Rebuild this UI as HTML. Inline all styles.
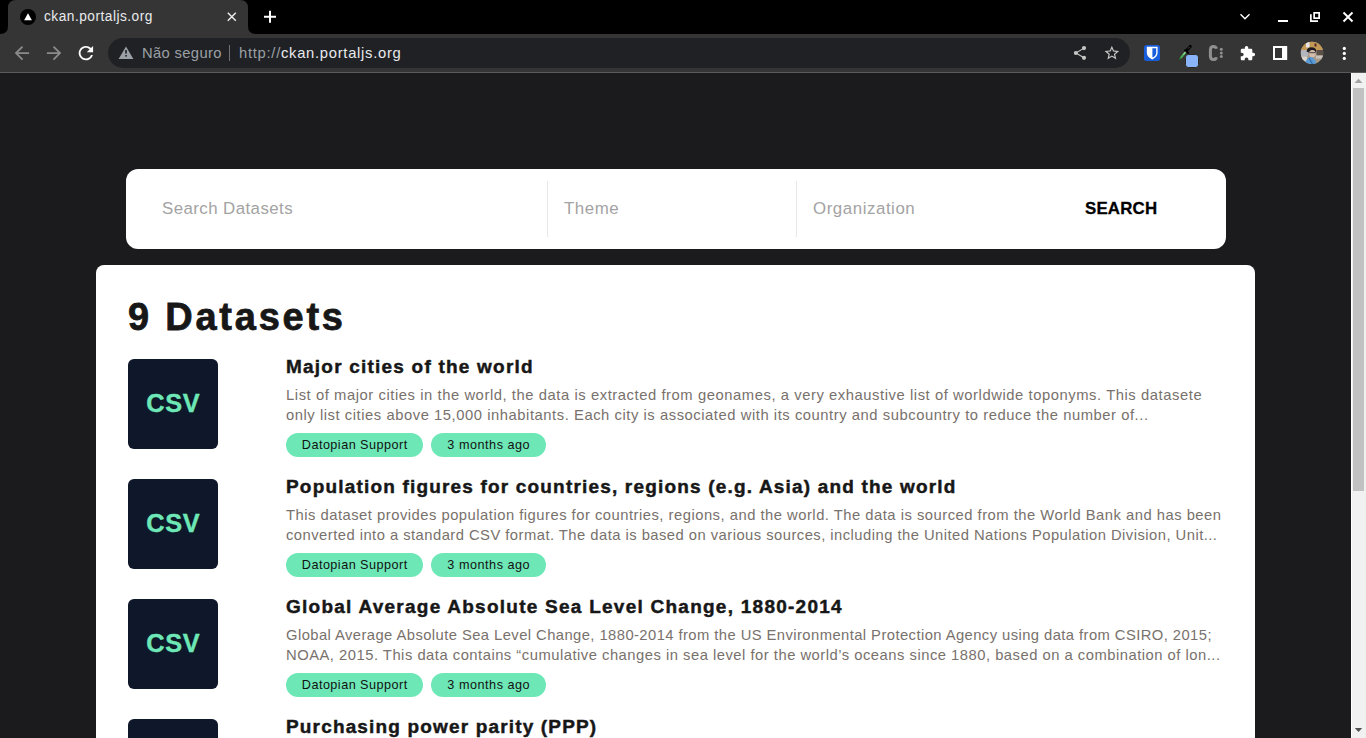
<!DOCTYPE html>
<html><head><meta charset="utf-8">
<style>
:root{--f:"Liberation Sans", sans-serif;}
*{margin:0;padding:0;box-sizing:border-box;}
html,body{width:1366px;height:738px;overflow:hidden;background:#000;font-family:var(--f);}
.abs{position:absolute;}
.t{position:absolute;white-space:nowrap;line-height:20px;}
/* chrome */
#frame{position:absolute;left:0;top:0;width:1366px;height:34px;background:#000;}
#tab{position:absolute;left:8px;top:0;width:240px;height:34px;background:#353535;border-radius:8px 8px 0 0;}
.tabcurve{position:absolute;top:26px;width:8px;height:8px;background:#353535;}
.tabcurve i{position:absolute;left:0;top:0;width:8px;height:8px;background:#000;}
#toolbar{position:absolute;left:0;top:34px;width:1366px;height:38px;background:#353535;}
#tline{position:absolute;left:0;top:72px;width:1366px;height:1px;background:#5b5b5b;}
#omni{position:absolute;left:108px;top:38px;width:1022px;height:30px;background:#202124;border-radius:15px;}
/* page */
#page{position:absolute;left:0;top:73px;width:1351px;height:665px;background:#1b1b1d;overflow:hidden;}
#sb{position:absolute;left:1351px;top:73px;width:15px;height:665px;background:#f1f1f1;border-left:1px solid #fff;}
#thumb{position:absolute;left:1px;top:15px;width:11px;height:403px;background:#c1c1c1;}
#search{position:absolute;left:126px;top:96px;width:1100px;height:80px;background:#fff;border-radius:12px;}
.ph{position:absolute;top:30px;font-size:16px;line-height:20px;color:#a3a3a3;white-space:nowrap;}
.div{position:absolute;top:12px;width:1px;height:56px;background:#e5e7eb;}
#card{position:absolute;left:96px;top:192px;width:1159px;height:700px;background:#fff;border-radius:8px;}
h1{position:absolute;left:32px;top:32px;font-size:36px;line-height:40px;font-weight:700;color:#171717;white-space:nowrap;}
.item{position:absolute;left:32px;width:1100px;height:90px;}
.csv{position:absolute;left:0;top:0;width:90px;height:90px;background:#0f172a;border-radius:6px;color:#6ee7b7;font-weight:700;font-size:24px;line-height:90px;text-align:center;}
.ttl{position:absolute;left:158px;top:-6px;font-size:18px;line-height:28px;font-weight:700;color:#171717;white-space:nowrap;}
.d{position:absolute;left:158px;font-size:14px;line-height:20px;color:#78716c;white-space:nowrap;}
.pill{position:absolute;top:74px;height:24px;border-radius:12px;background:#6ee7b7;color:#111;font-size:12px;line-height:24px;text-align:center;white-space:nowrap;}
</style></head><body>
<svg class="abs" style="left:0;top:0" width="1366" height="73" viewBox="0 0 1366 73">
<rect x="0" y="0" width="1366" height="34" fill="#000"></rect>
<rect x="0" y="34" width="1366" height="38" fill="#353535"></rect>
<rect x="0" y="72" width="1366" height="1" fill="#5a5a5a"></rect>
<path d="M0 34 Q8 34 8 26 L8 8 Q8 0 16 0 L240 0 Q248 0 248 8 L248 26 Q248 34 256 34 Z" fill="#353535"></path>
<circle cx="28" cy="17" r="8" fill="#000"></circle>
<path d="M28 13.2 L31.9 20.2 L24.1 20.2 Z" fill="#fff"></path>
<path d="M227.8 12.8 L235.8 20.8 M235.8 12.8 L227.8 20.8" stroke="#e8eaed" stroke-width="1.5"></path>
<path d="M264 16.8 H276 M270 10.8 V22.8" stroke="#fff" stroke-width="2"></path>
<path d="M1240.5 14.3 L1245 18.8 L1249.5 14.3" stroke="#fff" stroke-width="1.4" fill="none"></path>
<rect x="1278" y="20" width="10" height="2" fill="#fff"></rect>
<rect x="1314.15" y="12.85" width="5" height="5.3" stroke="#fff" stroke-width="1.7" fill="none"></rect>
<path d="M1310.85 14.2 V21.15 H1318" stroke="#fff" stroke-width="1.7" fill="none"></path>
<path d="M1343.5 12.5 L1352.5 21.5 M1352.5 12.5 L1343.5 21.5" stroke="#fff" stroke-width="1.9"></path>
<g transform="translate(11.1 42.3) scale(0.9)" fill="#8b8b8b"><path d="M20 11H7.83l5.59-5.59L12 4l-8 8 8 8 1.41-1.41L7.83 13H20v-2z"></path></g>
<g transform="translate(43.3 42.3) scale(0.9)" fill="#8b8b8b"><path d="M12 4l-1.41 1.41L16.17 11H4v2h12.17l-5.58 5.59L12 20l8-8z"></path></g>
<g transform="translate(75.1 42.3) scale(0.9)" fill="#fff"><path d="M17.65 6.35C16.2 4.9 14.21 4 12 4c-4.42 0-7.99 3.58-7.99 8s3.57 8 7.99 8c3.73 0 6.84-2.55 7.73-6h-2.08c-.82 2.33-3.04 4-5.65 4-3.31 0-6-2.69-6-6s2.69-6 6-6c1.66 0 3.14.69 4.22 1.78L13 11h7V4l-2.35 2.35z"></path></g>
<rect x="108" y="38" width="1022" height="30" rx="15" fill="#202124"></rect>
<path d="M126 46.6 L133.4 58.9 L118.6 58.9 Z" fill="#9aa0a6"></path>
<rect x="125.2" y="50" width="1.6" height="3.6" fill="#202124"></rect>
<rect x="125.2" y="55" width="1.6" height="1.6" fill="#202124"></rect>
<rect x="229" y="45" width="1" height="16" fill="#6f7276"></rect>
<g fill="#c4c7c5">
<circle cx="1075.9" cy="53" r="2.1"></circle><circle cx="1084" cy="48.1" r="2.1"></circle><circle cx="1084" cy="57.8" r="2.1"></circle>
<path d="M1075.9 53 L1084 48.1 M1075.9 53 L1084 57.8" stroke="#c4c7c5" stroke-width="1.1" fill="none"></path>
</g>
<g transform="translate(1103.1 44.2) scale(0.73)" fill="#c4c7c5"><path d="M22 9.24l-7.19-.62L12 2 9.19 8.63 2 9.24l5.46 4.73L5.82 21 12 17.27 18.18 21l-1.63-7.03L22 9.24zM12 15.4l-3.76 2.27 1-4.28-3.32-2.88 4.38-.38L12 6.1l1.71 4.04 4.38.38-3.32 2.88 1 4.28L12 15.4z"></path></g>
<rect x="1144" y="45" width="16" height="16" rx="2.5" fill="#175ddc"></rect>
<path d="M1146.8 46.8 H1157.6 V53 Q1157.6 56.8 1152.2 59.4 Q1146.8 56.8 1146.8 53 Z" fill="#fff"></path>
<path d="M1152.4 48.2 H1156.2 V53 Q1156.2 55.8 1152.4 57.6 Z" fill="#175ddc"></path>
<circle cx="1180" cy="58.8" r="1.1" fill="#1e6b2a"></circle>
<path d="M1181.2 57.4 L1186.3 51.4" stroke="#4caf50" stroke-width="2" stroke-linecap="round"></path>
<path d="M1183.5 54.2 L1186.3 51" stroke="#d8eed8" stroke-width="0.9" stroke-linecap="round"></path>
<path d="M1185 50.2 L1188.2 53" stroke="#000" stroke-width="1.8" stroke-linecap="round"></path>
<path d="M1187 50 L1190.3 46.4" stroke="#000" stroke-width="3" stroke-linecap="round"></path>
<path d="M1188.2 48.4 L1189.4 47.2" stroke="#888" stroke-width="0.8"></path>
<rect x="1185.5" y="54.5" width="13" height="13" rx="2.8" fill="#8ab4f8" stroke="#2b2824" stroke-width="1"></rect>
<path d="M1216.4 48.8 Q1216 46.4 1213.4 46.4 Q1210.4 46.4 1210.4 50 V56 Q1210.4 59.6 1213.4 59.6 Q1216 59.6 1216.4 57.2" stroke="#8f8f8f" stroke-width="3" fill="none"></path>
<circle cx="1221.3" cy="49.3" r="1.5" fill="#8f8f8f"></circle><circle cx="1221.3" cy="53" r="1.5" fill="#8f8f8f"></circle><circle cx="1221.3" cy="56.6" r="1.5" fill="#8f8f8f"></circle>
<g transform="translate(1239.4 45.3) scale(0.68)" fill="#fff"><path d="M20.5 11H19V7c0-1.1-.9-2-2-2h-4V3.5C13 2.120 11.88 1 10.5 1S8 2.12 8 3.5V5H4c-1.1 0-1.99.9-1.99 2v3.8H3.5c1.49 0 2.7 1.21 2.7 2.7s-1.21 2.7-2.7 2.7H2V20c0 1.1.9 2 2 2h3.8v-1.5c0-1.49 1.21-2.7 2.7-2.7 1.49 0 2.7 1.21 2.7 2.7V22H17c1.1 0 2-.9 2-2v-4h1.5c1.38 0 2.5-1.12 2.5-2.5S21.88 11 20.5 11z"></path></g>
<rect x="1273" y="46" width="14.2" height="14" fill="#fff"></rect>
<rect x="1275" y="48" width="7" height="10" fill="#353535"></rect>
<clipPath id="av"><circle cx="1312" cy="52.9" r="11.2"></circle></clipPath>
<g clip-path="url(#av)">
<rect x="1300" y="41" width="24" height="24" fill="#a89a86"></rect>
<rect x="1300" y="41" width="24" height="9.5" fill="#c29a55"></rect>
<rect x="1306" y="42" width="3.5" height="5.5" fill="#e6e6ea"></rect>
<rect x="1314.5" y="43.5" width="2" height="3" fill="#5a2a2a"></rect>
<rect x="1300" y="50" width="8" height="6.5" fill="#b4b6be"></rect>
<rect x="1300" y="56.5" width="7" height="5" fill="#d9d6d0"></rect>
<rect x="1316.5" y="50" width="7.5" height="5.5" fill="#5b5048"></rect>
<rect x="1316" y="55.5" width="8" height="3" fill="#c8c2bc"></rect>
<path d="M1306.5 51.5 Q1307 47.2 1311.5 47.2 Q1316 47.4 1316.2 50.5 L1316 52 L1309 52.5 Z" fill="#1c1c22"></path>
<ellipse cx="1312.4" cy="53.6" rx="3.3" ry="3.6" fill="#d6bcaa"></ellipse>
<rect x="1309.3" y="52.2" width="6.4" height="1" fill="#444"></rect>
<path d="M1304.5 66 Q1305 58.5 1310.5 57 Q1316 57.5 1316.8 66 Z" fill="#5a9bd6"></path>
<path d="M1309 58 L1313 65" stroke="#2f6aa8" stroke-width="1.2"></path>
</g>
<circle cx="1344.3" cy="48.4" r="1.6" fill="#fff"></circle><circle cx="1344.3" cy="53.4" r="1.6" fill="#fff"></circle><circle cx="1344.3" cy="58.4" r="1.6" fill="#fff"></circle>
</svg>
<div class="t" style="left: 44px; top: 7px; font-size: 13.71px; color: rgb(232, 234, 237); letter-spacing: 0.489px; transform: translateY(0.15px);">ckan.portaljs.org</div>
<div class="t" style="left: 142px; top: 43px; font-size: 14.77px; color: rgb(154, 160, 166); letter-spacing: 0.341px; transform: translateY(-0.27px);">Não seguro</div>
<div class="t" style="left: 239px; top: 43px; font-size: 14.77px; color: rgb(154, 160, 166); letter-spacing: 0.718px; transform: translateY(-0.27px);">http://<span style="color:#e8eaed">ckan.portaljs.org</span></div>
<div id="page">
  <div id="search">
    <div class="ph" style="left: 36px; font-size: 16.88px; letter-spacing: 0.427px; transform: translateY(-0.31px);">Search Datasets</div>
    <div class="div" style="left:421px"></div>
    <div class="ph" style="left: 438px; font-size: 16.88px; letter-spacing: 0.541px; transform: translateY(-0.31px);">Theme</div>
    <div class="div" style="left:670px"></div>
    <div class="ph" style="left: 687px; font-size: 16.88px; letter-spacing: 0.559px; transform: translateY(-0.31px);">Organization</div>
    <div class="ph" style="left: 959px; color: rgb(0, 0, 0); font-weight: 700; font-size: 16.88px; letter-spacing: 0.182px; transform: translateY(-0.31px); -webkit-text-stroke: 0.27px currentcolor;">SEARCH</div>
  </div>
  <div id="card">
    <h1 style="font-size: 37.98px; letter-spacing: 2.778px; transform: translateY(-0.19px); -webkit-text-stroke: 0.76px currentcolor;">9 Datasets</h1>
    <div class="item" style="top:94px">
      <div class="csv"><span style="font-size: 25.32px; letter-spacing: 0.625px; margin-left: 0.625px; position: relative; top: -1.36px; -webkit-text-stroke: 0.354px currentcolor;">CSV</span></div>
      <div class="ttl" style="font-size: 18.99px; letter-spacing: 1.221px; transform: translateY(-0.34px); -webkit-text-stroke: 0.456px currentcolor;">Major cities of the world</div>
      <div class="d" style="top: 26px; font-size: 14.77px; letter-spacing: 0.568px; transform: translateY(-0.27px);">List of major cities in the world, the data is extracted from geonames, a very exhaustive list of worldwide toponyms. This datasete</div>
      <div class="d" style="top: 46px; font-size: 14.77px; letter-spacing: 0.551px; transform: translateY(-0.27px);">only list cities above 15,000 inhabitants. Each city is associated with its country and subcountry to reduce the number of...</div>
      <div class="pill" style="left:158px;width:137px"><span style="font-size: 12.66px; letter-spacing: 0.456px; margin-left: 0.456px; position: relative; top: -0.23px;">Datopian Support</span></div>
      <div class="pill" style="left:303px;width:115px"><span style="font-size: 12.66px; letter-spacing: 0.507px; margin-left: 0.507px; position: relative; top: -0.23px;">3 months ago</span></div>
    </div>
    <div class="item" style="top:214px">
      <div class="csv"><span style="font-size: 25.32px; letter-spacing: 0.625px; margin-left: 0.625px; position: relative; top: -1.36px; -webkit-text-stroke: 0.354px currentcolor;">CSV</span></div>
      <div class="ttl" style="font-size: 18.99px; letter-spacing: 1.187px; transform: translateY(-0.34px); -webkit-text-stroke: 0.456px currentcolor;">Population figures for countries, regions (e.g. Asia) and the world</div>
      <div class="d" style="top: 26px; font-size: 14.77px; letter-spacing: 0.5px; transform: translateY(-0.27px);">This dataset provides population figures for countries, regions, and the world. The data is sourced from the World Bank and has been</div>
      <div class="d" style="top: 46px; font-size: 14.77px; letter-spacing: 0.47px; transform: translateY(-0.27px);">converted into a standard CSV format. The data is based on various sources, including the United Nations Population Division, Unit...</div>
      <div class="pill" style="left:158px;width:137px"><span style="font-size: 12.66px; letter-spacing: 0.456px; margin-left: 0.456px; position: relative; top: -0.23px;">Datopian Support</span></div>
      <div class="pill" style="left:303px;width:115px"><span style="font-size: 12.66px; letter-spacing: 0.507px; margin-left: 0.507px; position: relative; top: -0.23px;">3 months ago</span></div>
    </div>
    <div class="item" style="top:334px">
      <div class="csv"><span style="font-size: 25.32px; letter-spacing: 0.625px; margin-left: 0.625px; position: relative; top: -1.36px; -webkit-text-stroke: 0.354px currentcolor;">CSV</span></div>
      <div class="ttl" style="font-size: 18.99px; letter-spacing: 1.257px; transform: translateY(-0.34px); -webkit-text-stroke: 0.456px currentcolor;">Global Average Absolute Sea Level Change, 1880-2014</div>
      <div class="d" style="top: 26px; font-size: 14.77px; letter-spacing: 0.433px; transform: translateY(-0.27px);">Global Average Absolute Sea Level Change, 1880-2014 from the US Environmental Protection Agency using data from CSIRO, 2015;</div>
      <div class="d" style="top: 46px; font-size: 14.77px; letter-spacing: 0.503px; transform: translateY(-0.27px);">NOAA, 2015. This data contains “cumulative changes in sea level for the world’s oceans since 1880, based on a combination of lon...</div>
      <div class="pill" style="left:158px;width:137px"><span style="font-size: 12.66px; letter-spacing: 0.456px; margin-left: 0.456px; position: relative; top: -0.23px;">Datopian Support</span></div>
      <div class="pill" style="left:303px;width:115px"><span style="font-size: 12.66px; letter-spacing: 0.507px; margin-left: 0.507px; position: relative; top: -0.23px;">3 months ago</span></div>
    </div>
    <div class="item" style="top:454px">
      <div class="csv"><span style="font-size: 25.32px; letter-spacing: 0.625px; margin-left: 0.625px; position: relative; top: -1.36px; -webkit-text-stroke: 0.354px currentcolor;">CSV</span></div>
      <div class="ttl" style="font-size: 18.99px; letter-spacing: 1.168px; transform: translateY(-0.34px); -webkit-text-stroke: 0.456px currentcolor;">Purchasing power parity (PPP)</div>
    </div>
  </div>
</div>
<div id="sb"><div id="thumb"></div>
<svg class="abs" style="left:-1px;top:0" width="15" height="665" viewBox="0 0 15 665"><path d="M3.5 10 L7.5 5.8 L11.5 10 Z" fill="#a3a3a3"></path><path d="M3.8 654.9 L7.5 659 L11.2 654.9 Z" fill="#505050"></path></svg></div>

</body></html>
